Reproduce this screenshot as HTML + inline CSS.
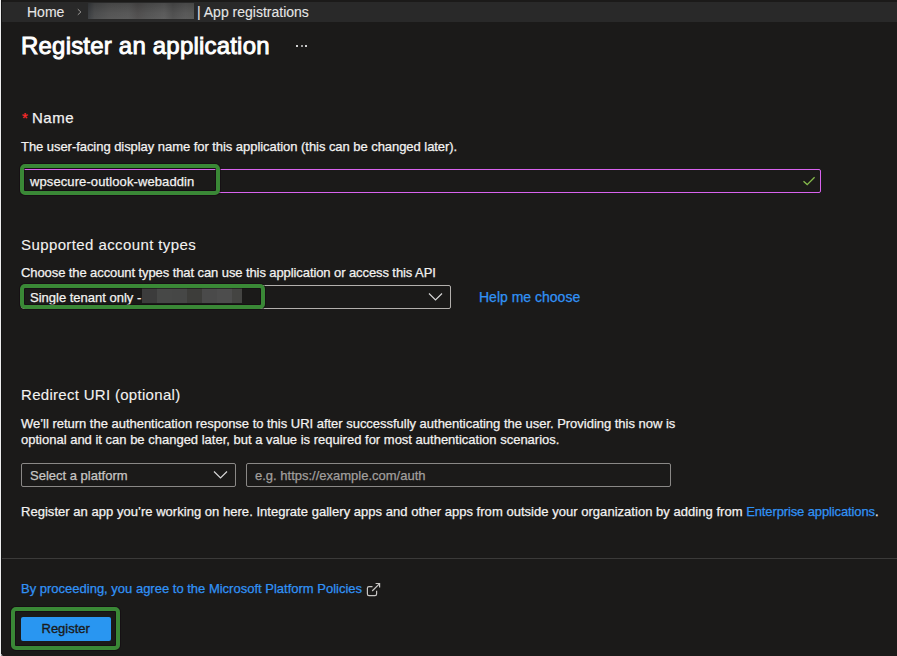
<!DOCTYPE html>
<html><head><meta charset="utf-8">
<style>
html,body{margin:0;padding:0;}
body{width:897px;height:656px;overflow:hidden;background:#1b1a19;position:relative;font-family:"Liberation Sans",sans-serif;color:#f3f2f1;}
.a{position:absolute;white-space:nowrap;line-height:1;-webkit-text-stroke:0.25px currentColor;}
.t13{font-size:13px;}
.lnk{color:#3192f5;}
.box{position:absolute;box-sizing:border-box;}
.green{position:absolute;box-sizing:border-box;border:4px solid #3a8836;border-radius:5px;box-shadow:0 0 0 1px rgba(20,10,16,.6), inset 0 0 0 1px rgba(20,10,16,.6);}
</style></head><body>
<!-- left border -->
<div class="box" style="left:0;top:0;width:1px;height:656px;background:#eeeeee;"></div>
<div class="box" style="left:1px;top:0;width:1px;height:656px;background:#151515;"></div>
<div class="box" style="left:1px;top:654px;width:1px;height:2px;background:#9a9a9a;"></div><div class="box" style="left:2px;top:655px;width:1px;height:1px;background:#555;"></div>
<!-- breadcrumb bar -->
<div class="box" style="left:2px;top:2px;width:895px;height:20px;background:#292929;"></div>
<div class="a" id="home" style="left:27px;top:5px;font-size:14px;color:#e6e6e6;-webkit-text-stroke:0.1px #e6e6e6;">Home</div>
<svg class="box" style="left:76px;top:8px;" width="7" height="8" viewBox="0 0 7 8"><path d="M1.8 1.2 L4.9 4 L1.8 6.8" fill="none" stroke="#9a9896" stroke-width="1"/></svg>
<div class="box" style="left:88px;top:3px;width:106px;height:16px;background:linear-gradient(180deg,rgba(0,0,0,.18) 0%,rgba(0,0,0,0) 60%,rgba(255,255,255,.03) 100%),linear-gradient(90deg,#383b3e 0%,#4a4b4c 6%,#545454 20%,#575757 38%,#4f4d4d 47%,#535353 55%,#5b5b5b 72%,#4f4f4f 80%,#585858 92%,#565654 100%);"></div>
<div class="a" id="appreg" style="left:197px;top:5px;font-size:14px;color:#e6e6e6;-webkit-text-stroke:0.1px #e6e6e6;">| App registrations</div>

<!-- title -->
<div class="a" id="title" style="left:21px;top:34px;font-size:24px;letter-spacing:0.2px;color:#ffffff;-webkit-text-stroke:0.9px #fff;">Register an application</div>
<div class="box" style="left:296px;top:45px;width:2px;height:2px;background:#d0d0d0;"></div>
<div class="box" style="left:301px;top:45px;width:2px;height:2px;background:#a0a0a0;"></div>
<div class="box" style="left:305px;top:45px;width:2px;height:2px;background:#d0d0d0;"></div>

<!-- Name -->
<div class="a" style="left:22px;top:110px;font-size:15px;color:#ff2b2b;">*</div>
<div class="a" id="name" style="left:32px;top:110px;font-size:15px;letter-spacing:0.5px;">Name</div>
<div class="a t13" id="desc1" style="left:21px;top:140px;letter-spacing:-0.05px;">The user-facing display name for this application (this can be changed later).</div>
<div class="box" style="left:21px;top:169px;width:800px;height:24px;border:1px solid #d863ee;border-radius:2px;"></div>
<svg class="box" style="left:802px;top:175px;" width="15" height="12" viewBox="0 0 15 12"><path d="M1.5 6.2 L5.2 9.6 L12.6 2.3" fill="none" stroke="#86bb4c" stroke-width="1.3"/></svg>
<div class="a t13" id="nameval" style="left:30px;top:175px;letter-spacing:0.1px;">wpsecure-outlook-webaddin</div>
<div class="green" style="left:20px;top:164px;width:200px;height:31px;"></div>

<!-- Supported account types -->
<div class="a" id="sat" style="left:21px;top:237px;font-size:15px;letter-spacing:0.4px;-webkit-text-stroke:0.1px currentColor;">Supported account types</div>
<div class="a t13" id="choose" style="left:21px;top:266px;letter-spacing:-0.09px;">Choose the account types that can use this application or access this API</div>
<div class="box" style="left:21px;top:285px;width:430px;height:24px;border:1px solid #b3b0ad;border-radius:2px;"></div>
<svg class="box" style="left:428px;top:292px;" width="15" height="10" viewBox="0 0 15 10"><path d="M1 1.5 L7.5 8 L14 1.5" fill="none" stroke="#d6d6d6" stroke-width="1.2"/></svg>
<div class="a t13" id="single" style="left:30px;top:291px;">Single tenant only -</div>
<div class="box" style="left:142px;top:288px;width:100px;height:15px;display:flex;">
<div style="width:15px;background:#3c3c3c"></div><div style="width:15px;background:#474847"></div><div style="width:15px;background:#464746"></div><div style="width:15px;background:#3d3d3a"></div><div style="width:15px;background:#4a4a4a"></div><div style="width:15px;background:#4d4d4d"></div><div style="width:10px;background:#444442"></div>
</div>
<div class="green" style="left:20px;top:284px;width:245px;height:25px;"></div>
<div class="a lnk" id="help" style="left:479px;top:290px;font-size:14px;">Help me choose</div>

<!-- Redirect URI -->
<div class="a" id="redir" style="left:21px;top:387px;font-size:15px;letter-spacing:0.3px;-webkit-text-stroke:0.1px currentColor;">Redirect URI (optional)</div>
<div class="a t13" id="p1" style="left:21px;top:417px;letter-spacing:-0.02px;">We’ll return the authentication response to this URI after successfully authenticating the user. Providing this now is</div>
<div class="a t13" id="p2" style="left:21px;top:433px;">optional and it can be changed later, but a value is required for most authentication scenarios.</div>
<div class="box" style="left:21px;top:463px;width:215px;height:24px;border:1px solid #8a8886;border-radius:2px;"></div>
<div class="a t13" id="sel" style="left:30px;top:469px;color:#c8c6c4;">Select a platform</div>
<svg class="box" style="left:213px;top:470px;" width="15" height="10" viewBox="0 0 15 10"><path d="M1 1.5 L7.5 8 L14 1.5" fill="none" stroke="#d6d6d6" stroke-width="1.2"/></svg>
<div class="box" style="left:246px;top:463px;width:425px;height:24px;border:1px solid #8a8886;border-radius:2px;"></div>
<div class="a t13" id="ph" style="left:255px;top:469px;color:#a19f9d;">e.g. https://example.com/auth</div>
<div class="a t13" id="reg" style="left:21px;top:505px;letter-spacing:0.032px;">Register an app you’re working on here. Integrate gallery apps and other apps from outside your organization by adding from <span class="lnk" style="letter-spacing:-0.12px;">Enterprise applications</span>.</div>

<!-- footer -->
<div class="box" style="left:2px;top:558px;width:895px;height:1px;background:#3b3a39;"></div>
<div class="a t13 lnk" id="policy" style="left:21px;top:582px;">By proceeding, you agree to the Microsoft Platform Policies</div>
<svg class="box" style="left:366px;top:582px;" width="15" height="15" viewBox="0 0 15 15"><path d="M6.5 4.6 H3 Q1.4 4.6 1.4 6.2 V12 Q1.4 13.6 3 13.6 H9 Q10.6 13.6 10.6 12 V8.8" fill="none" stroke="#c8c6c4" stroke-width="1.2"/><path d="M6.2 9 L13.6 1.6 M9.6 1.5 H13.6 V5.5" fill="none" stroke="#c8c6c4" stroke-width="1.2"/></svg>
<div class="box" style="left:21px;top:617px;width:90px;height:24px;background:#2996f1;border-radius:2px;"></div>
<div class="a t13" id="regbtn" style="left:41.5px;top:622px;color:#1b1a19;-webkit-text-stroke:0.35px #1b1a19;">Register</div>
<div class="green" style="left:11px;top:607px;width:109px;height:43px;"></div>
</body></html>
